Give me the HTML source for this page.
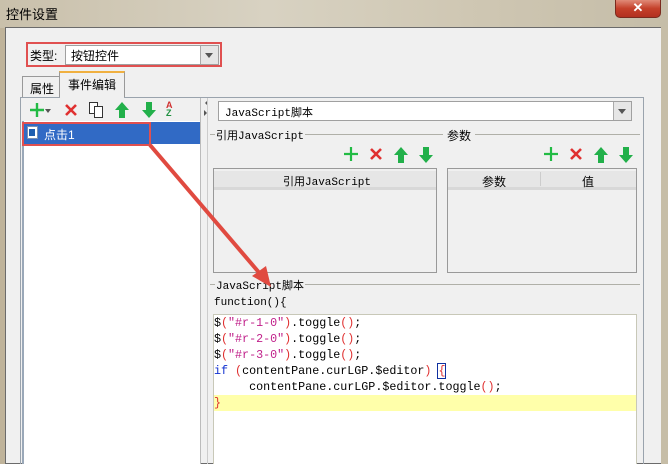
<!DOCTYPE html>
<html><head><meta charset="utf-8"><style>
*{margin:0;padding:0;box-sizing:border-box}
body{width:668px;height:464px;overflow:hidden;position:relative;background:#bfb39a;font-family:"Liberation Sans","Noto Sans CJK SC",sans-serif;font-size:12px;color:#000}
.a{position:absolute}
.mono{font-family:"Liberation Mono","Noto Sans CJK SC",monospace}
</style></head><body>
<div class="a" style="left:0;top:0;width:668px;height:28px;background:linear-gradient(90deg,#c9c0ab,#d8d2c2 40%,#cfc7b3 70%,#c5bda8)"></div>
<div class="a" style="left:6px;top:4px;font-size:13px">控件设置</div>
<div class="a" style="left:615px;top:0;width:46px;height:18px;background:linear-gradient(#e08a78,#c4402a 50%,#b23020);border:1px solid #7a2a1e;border-top:none;border-radius:0 0 5px 5px;color:#fff;font-weight:bold;text-align:center;font-size:13px;line-height:16px">✕</div>
<div class="a" style="left:5px;top:27px;width:657px;height:437px;background:#f0f0f0;border:1px solid #6b6b6b"></div>
<div class="a" style="left:661px;top:27px;width:7px;height:437px;background:#c6bda7"></div>
<!-- type -->
<div class="a" style="left:26px;top:42px;width:196px;height:25px;border:2px solid #e05050"></div>
<div class="a" style="left:30px;top:47px">类型:</div>
<div class="a" style="left:65px;top:45px;width:154px;height:20px;background:#fff;border:1px solid #a0a0a0"></div>
<div class="a" style="left:71px;top:47px">按钮控件</div>
<div class="a" style="left:200px;top:46px;width:18px;height:18px;background:#e6e6e6;border-left:1px solid #aaa"></div>
<div class="a" style="left:205px;top:53px;border:4px solid transparent;border-top:5px solid #555"></div>
<!-- tabs -->
<div class="a" style="left:22px;top:76px;width:38px;height:22px;background:#f0f0f0;border:1px solid #999;border-bottom:none"></div>
<div class="a" style="left:30px;top:80px">属性</div>
<div class="a" style="left:59px;top:71px;width:66px;height:27px;background:#f0f0f0;border:1px solid #999;border-top:2px solid #f0b040;border-bottom:none"></div>
<div class="a" style="left:68px;top:76px">事件编辑</div>
<div class="a" style="left:20px;top:97px;width:624px;height:367px;border:1px solid #9aa3ad;border-bottom:none"></div>
<div class="a" style="left:60px;top:97px;width:64px;height:2px;background:#f0f0f0"></div>
<!-- left panel -->
<div class="a" style="left:21px;top:98px;width:180px;height:366px;border-right:1px solid #bbb"></div>
<div class="a" style="left:22px;top:121px;width:178px;height:343px;background:#fff;border-left:2px solid #9aa8b8"></div>
<svg class="a" style="left:29px;top:102px" width="16" height="16"><path d="M8 1V15M1 8H15" stroke="#22bb44" stroke-width="2.4"/></svg>
<div class="a" style="left:45px;top:109px;border:3px solid transparent;border-top:4px solid #555"></div>
<svg class="a" style="left:64px;top:103px" width="14" height="14"><path d="M2 2L12 12M12 2L2 12" stroke="#e03030" stroke-width="2.6"/></svg>
<div class="a" style="left:89px;top:102px;width:9px;height:12px;border:1px solid #333;background:#fff"></div>
<div class="a" style="left:94px;top:106px;width:9px;height:12px;border:1px solid #333;background:#fff"></div>
<svg class="a" style="left:114px;top:101px" width="16" height="18"><path d="M8 1L15 9H11V17H5V9H1Z" fill="#22b04a"/></svg>
<svg class="a" style="left:141px;top:101px" width="16" height="18"><path d="M8 17L15 9H11V1H5V9H1Z" fill="#22b04a"/></svg>
<div class="a" style="left:166px;top:101px;font-size:9px;line-height:8px;font-weight:bold"><span style="color:#d03030">A</span><br><span style="color:#209040">Z</span></div>
<div class="a" style="left:22px;top:122px;width:178px;height:22px;background:#316ac5"></div>
<div class="a" style="left:27px;top:126px;width:11px;height:13px;background:#fff;border:1px solid #7a90b0"></div>
<div class="a" style="left:29px;top:129px;width:6px;height:7px;background:#1f5fb0"></div>
<div class="a" style="left:44px;top:126px;color:#fff">点击1</div>
<div class="a" style="left:22px;top:122px;width:129px;height:24px;border:2px solid #e05050"></div>
<!-- splitter -->
<div class="a" style="left:202px;top:100px;border:3px solid transparent;border-right:3px solid #555"></div>
<div class="a" style="left:204px;top:110px;border:3px solid transparent;border-left:3px solid #555"></div>
<div class="a" style="left:207px;top:98px;width:1px;height:366px;background:#ccc"></div>
<!-- right combo -->
<div class="a" style="left:218px;top:101px;width:414px;height:20px;background:#fff;border:1px solid #a0a0a0"></div>
<div class="a mono" style="left:225px;top:104px;font-size:11px">JavaScript脚本</div>
<div class="a" style="left:613px;top:102px;width:18px;height:18px;background:#e6e6e6;border-left:1px solid #aaa"></div>
<div class="a" style="left:618px;top:109px;border:4px solid transparent;border-top:5px solid #555"></div>
<!-- groups -->
<div class="a" style="left:210px;top:134px;width:430px;height:1px;background:#b0b0a8"></div>
<div class="a mono" style="left:215px;top:127px;background:#f0f0f0;padding:0 1px;font-size:11px">引用JavaScript</div>
<div class="a" style="left:443px;top:127px;background:#f0f0f0;padding:0 4px">参数</div>
<div class="a" style="left:210px;top:284px;width:430px;height:1px;background:#b0b0a8"></div>
<div class="a mono" style="left:215px;top:277px;background:#f0f0f0;padding:0 1px;font-size:11px">JavaScript脚本</div>
<!-- icon rows -->
<svg class="a" style="left:343px;top:146px" width="16" height="16"><path d="M8 1V15M1 8H15" stroke="#22bb44" stroke-width="2.2"/></svg>
<svg class="a" style="left:369px;top:147px" width="14" height="14"><path d="M2 2L12 12M12 2L2 12" stroke="#e03030" stroke-width="2.6"/></svg>
<svg class="a" style="left:393px;top:146px" width="16" height="18"><path d="M8 1L15 9H11V17H5V9H1Z" fill="#22b04a"/></svg>
<svg class="a" style="left:418px;top:146px" width="16" height="18"><path d="M8 17L15 9H11V1H5V9H1Z" fill="#22b04a"/></svg>
<svg class="a" style="left:543px;top:146px" width="16" height="16"><path d="M8 1V15M1 8H15" stroke="#22bb44" stroke-width="2.2"/></svg>
<svg class="a" style="left:569px;top:147px" width="14" height="14"><path d="M2 2L12 12M12 2L2 12" stroke="#e03030" stroke-width="2.6"/></svg>
<svg class="a" style="left:593px;top:146px" width="16" height="18"><path d="M8 1L15 9H11V17H5V9H1Z" fill="#22b04a"/></svg>
<svg class="a" style="left:618px;top:146px" width="16" height="18"><path d="M8 17L15 9H11V1H5V9H1Z" fill="#22b04a"/></svg>
<!-- tables -->
<div class="a" style="left:213px;top:168px;width:224px;height:105px;border:1px solid #999"></div>
<div class="a" style="left:214px;top:171px;width:222px;height:19px;background:#e6e6e6;border-bottom:3px solid #d8d8d8"></div>
<div class="a mono" style="left:283px;top:173px;font-size:11px">引用JavaScript</div>
<div class="a" style="left:447px;top:168px;width:190px;height:105px;border:1px solid #999"></div>
<div class="a" style="left:448px;top:171px;width:188px;height:19px;background:#e6e6e6;border-bottom:3px solid #d8d8d8"></div>
<div class="a" style="left:540px;top:172px;width:1px;height:14px;background:#ccc"></div>
<div class="a" style="left:482px;top:173px">参数</div>
<div class="a" style="left:582px;top:173px">值</div>
<!-- code -->
<div class="a mono" style="left:214px;top:297px;font-size:11px">function(){</div>
<div class="a" style="left:213px;top:314px;width:424px;height:150px;background:#fff;border:1px solid #c8c8b8;border-bottom:none"></div>
<div class="a" style="left:214px;top:395px;width:422px;height:16px;background:#ffffaa"></div>
<div class="a mono" style="left:214px;top:315px;font-size:11.7px;line-height:16px;white-space:pre">$<span style="color:#e03030">(</span><span style="color:#c0208a">"#r-1-0"</span><span style="color:#e03030">)</span>.toggle<span style="color:#e03030">()</span>;
$<span style="color:#e03030">(</span><span style="color:#c0208a">"#r-2-0"</span><span style="color:#e03030">)</span>.toggle<span style="color:#e03030">()</span>;
$<span style="color:#e03030">(</span><span style="color:#c0208a">"#r-3-0"</span><span style="color:#e03030">)</span>.toggle<span style="color:#e03030">()</span>;
<span style="color:#1030d0">if</span> <span style="color:#e03030">(</span>contentPane.curLGP.$editor<span style="color:#e03030">)</span> <span style="color:#e03030;outline:1px solid #1030a0">{</span>
     contentPane.curLGP.$editor.toggle<span style="color:#e03030">()</span>;
<span style="color:#e03030">}</span></div>
<!-- arrow -->
<svg class="a" style="left:0;top:0" width="668" height="464"><line x1="150" y1="145" x2="262" y2="276" stroke="#e04a40" stroke-width="4"/><path d="M271 287L252 276L266 266Z" fill="#e04a40"/></svg>
</body></html>
